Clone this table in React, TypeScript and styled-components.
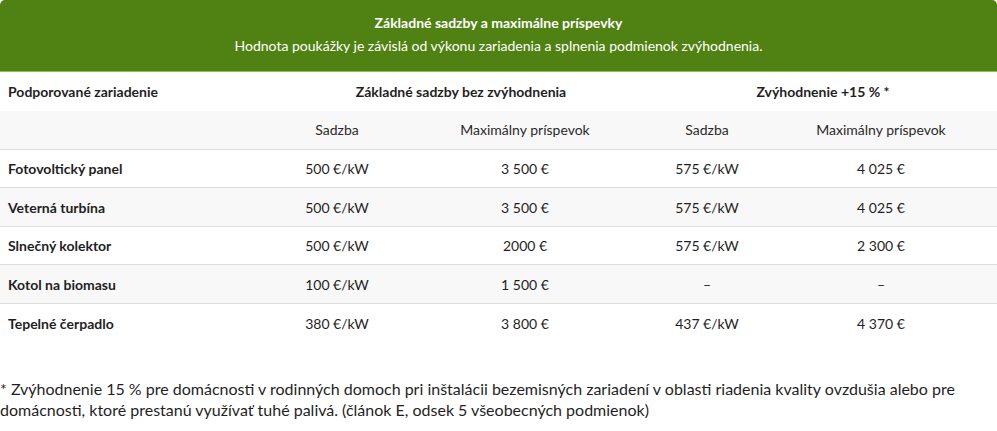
import React from "react";
import styled, { createGlobalStyle } from "styled-components";

const Global = createGlobalStyle`
  html, body { margin: 0; padding: 0; background: #fff; }
  body { font-family: Lato, "Liberation Sans", sans-serif; color: #1f1f1f; }
`;

const Page = styled.div`
  width: 997px;
`;

const Banner = styled.div`
  background: #4f8212;
  border-radius: 5px 5px 0 0;
  border-bottom: 1px solid #8fbf5a;
  height: 72px;
  box-sizing: border-box;
  padding-top: 14px;
  color: #fff;
  text-align: center;
`;

const BannerTitle = styled.div`
  font-weight: 700;
  font-size: 14px;
  line-height: 18px;
`;

const BannerSub = styled.div`
  font-size: 14px;
  line-height: 20px;
  margin-top: 4px;
`;

const Table = styled.table`
  width: 997px;
  border-collapse: collapse;
  table-layout: fixed;
  font-size: 14px;
`;

const Row = styled.tr<{ $shade?: boolean }>`
  background: ${(p) => (p.$shade ? "#f8f8f8" : "#fff")};
  border-bottom: 1px solid #dcdcdc;
  height: 38.6px;
  &:last-child { border-bottom: none; }
`;

const HeadCell = styled.th<{ $left?: boolean }>`
  font-weight: 700;
  text-align: ${(p) => (p.$left ? "left" : "center")};
  padding: 0 8px;
`;

const SubCell = styled.td`
  text-align: center;
  color: #2a2a2a;
  padding: 0 8px;
`;

const Label = styled.td`
  font-weight: 700;
  text-align: left;
  padding: 0 8px;
`;

const Value = styled.td`
  text-align: center;
  padding: 0 8px;
`;

const Note = styled.p`
  margin: 36px 0 0;
  font-size: 16px;
  line-height: 21px;
  color: #1f1f1f;
`;

const rows = [
  ["Fotovoltický panel", "500 €/kW", "3 500 €", "575 €/kW", "4 025 €"],
  ["Veterná turbína", "500 €/kW", "3 500 €", "575 €/kW", "4 025 €"],
  ["Slnečný kolektor", "500 €/kW", "2000 €", "575 €/kW", "2 300 €"],
  ["Kotol na biomasu", "100 €/kW", "1 500 €", "–", "–"],
  ["Tepelné čerpadlo", "380 €/kW", "3 800 €", "437 €/kW", "4 370 €"],
];

export default function App() {
  return (
    <Page>
      <Global />
      <Banner>
        <BannerTitle>Základné sadzby a maximálne príspevky</BannerTitle>
        <BannerSub>
          Hodnota poukážky je závislá od výkonu zariadenia a splnenia podmienok zvýhodnenia.
        </BannerSub>
      </Banner>
      <Table>
        <colgroup>
          <col style={{ width: 273 }} />
          <col style={{ width: 128 }} />
          <col style={{ width: 248 }} />
          <col style={{ width: 116 }} />
          <col style={{ width: 232 }} />
        </colgroup>
        <thead>
          <Row>
            <HeadCell $left>Podporované zariadenie</HeadCell>
            <HeadCell colSpan={2}>Základné sadzby bez zvýhodnenia</HeadCell>
            <HeadCell colSpan={2}>Zvýhodnenie +15 % *</HeadCell>
          </Row>
        </thead>
        <tbody>
          <Row $shade>
            <SubCell />
            <SubCell>Sadzba</SubCell>
            <SubCell>Maximálny príspevok</SubCell>
            <SubCell>Sadzba</SubCell>
            <SubCell>Maximálny príspevok</SubCell>
          </Row>
          {rows.map((r, i) => (
            <Row key={r[0]} $shade={i % 2 === 1}>
              <Label>{r[0]}</Label>
              {r.slice(1).map((v, j) => (
                <Value key={j}>{v}</Value>
              ))}
            </Row>
          ))}
        </tbody>
      </Table>
      <Note>
        * Zvýhodnenie 15 % pre domácnosti v rodinných domoch pri inštalácii bezemisných zariadení v oblasti riadenia kvality ovzdušia alebo pre domácnosti, ktoré prestanú využívať tuhé palivá. (článok E, odsek 5 všeobecných podmienok)
      </Note>
    </Page>
  );
}
